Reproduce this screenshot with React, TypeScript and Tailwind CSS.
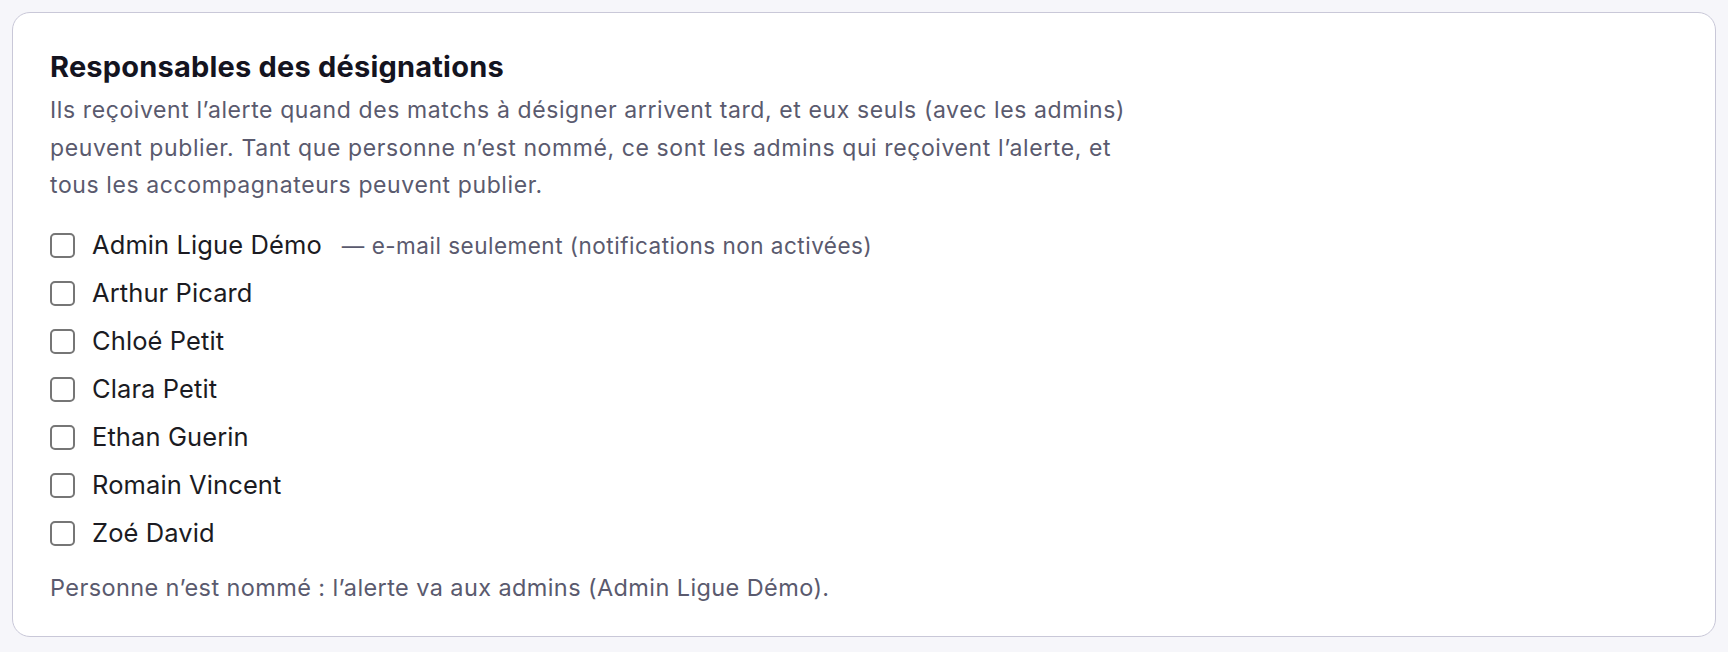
import { useState } from 'react';

interface Member {
  id:    number;
  name:  string;
  note?: string;
}

const members: Member[] = [
  { id: 1, name: 'Admin Ligue Démo', note: '— e-mail seulement (notifications non activées)' },
  { id: 2, name: 'Arthur Picard' },
  { id: 3, name: 'Chloé Petit' },
  { id: 4, name: 'Clara Petit' },
  { id: 5, name: 'Ethan Guerin' },
  { id: 6, name: 'Romain Vincent' },
  { id: 7, name: 'Zoé David' },
];

export default function App() {
  const [checked, setChecked] = useState<number[]>([]);

  const toggle = (id: number) =>
    setChecked(c => (c.includes(id) ? c.filter(x => x !== id) : [...c, id]));

  return (
    <div className="min-h-[652px] bg-[#f6f6fa] p-3 font-['Inter',_'Noto_Sans',_sans-serif]">
      <div className="bg-white border-[1.5px] border-[#c9c8d8] rounded-[18px] pl-[37px] pr-8 pt-[37px] pb-[30px]">

        {/* Header */}
        <h2 className="text-[29px] leading-[34px] font-bold text-[#14141f] tracking-[0.2px]">
          Responsables des désignations
        </h2>
        <p className="mt-2 max-w-[1100px] text-[23px] leading-[37.5px] text-[#5a5a6e] tracking-[0.6px]">
          Ils reçoivent l’alerte quand des matchs à désigner arrivent tard, et eux seuls (avec les admins)
          peuvent publier. Tant que personne n’est nommé, ce sont les admins qui reçoivent l’alerte, et
          tous les accompagnateurs peuvent publier.
        </p>

        {/* Members */}
        <div className="mt-[23px] flex flex-col gap-3">
          {members.map(m => (
            <label key={m.id} className="flex items-center h-9 cursor-pointer select-none">
              <span
                onClick={() => toggle(m.id)}
                className={`w-[25px] h-[25px] rounded-[5px] border-2 flex items-center justify-center flex-shrink-0 ${
                  checked.includes(m.id) ? 'bg-[#1a73e8] border-[#1a73e8]' : 'bg-white border-[#767676]'
                }`}
              >
                {checked.includes(m.id) && (
                  <svg viewBox="0 0 16 16" className="w-4 h-4 text-white" fill="none" stroke="currentColor" strokeWidth="2.5">
                    <path d="M3 8.5l3.2 3L13 4.5" />
                  </svg>
                )}
              </span>
              <span className="ml-[17px] text-[25.5px] text-[#1b1b22] tracking-[0.1px]">{m.name}</span>
              {m.note && (
                <span className="ml-5 text-[22.5px] text-[#5a5a6e] tracking-[0.5px]">{m.note}</span>
              )}
            </label>
          ))}
        </div>

        {/* Footer note */}
        <p className="mt-[17px] text-[23.5px] leading-[37.5px] text-[#5a5a6e] tracking-[0.4px]">
          Personne n’est nommé : l’alerte va aux admins (Admin Ligue Démo).
        </p>
      </div>
    </div>
  );
}
